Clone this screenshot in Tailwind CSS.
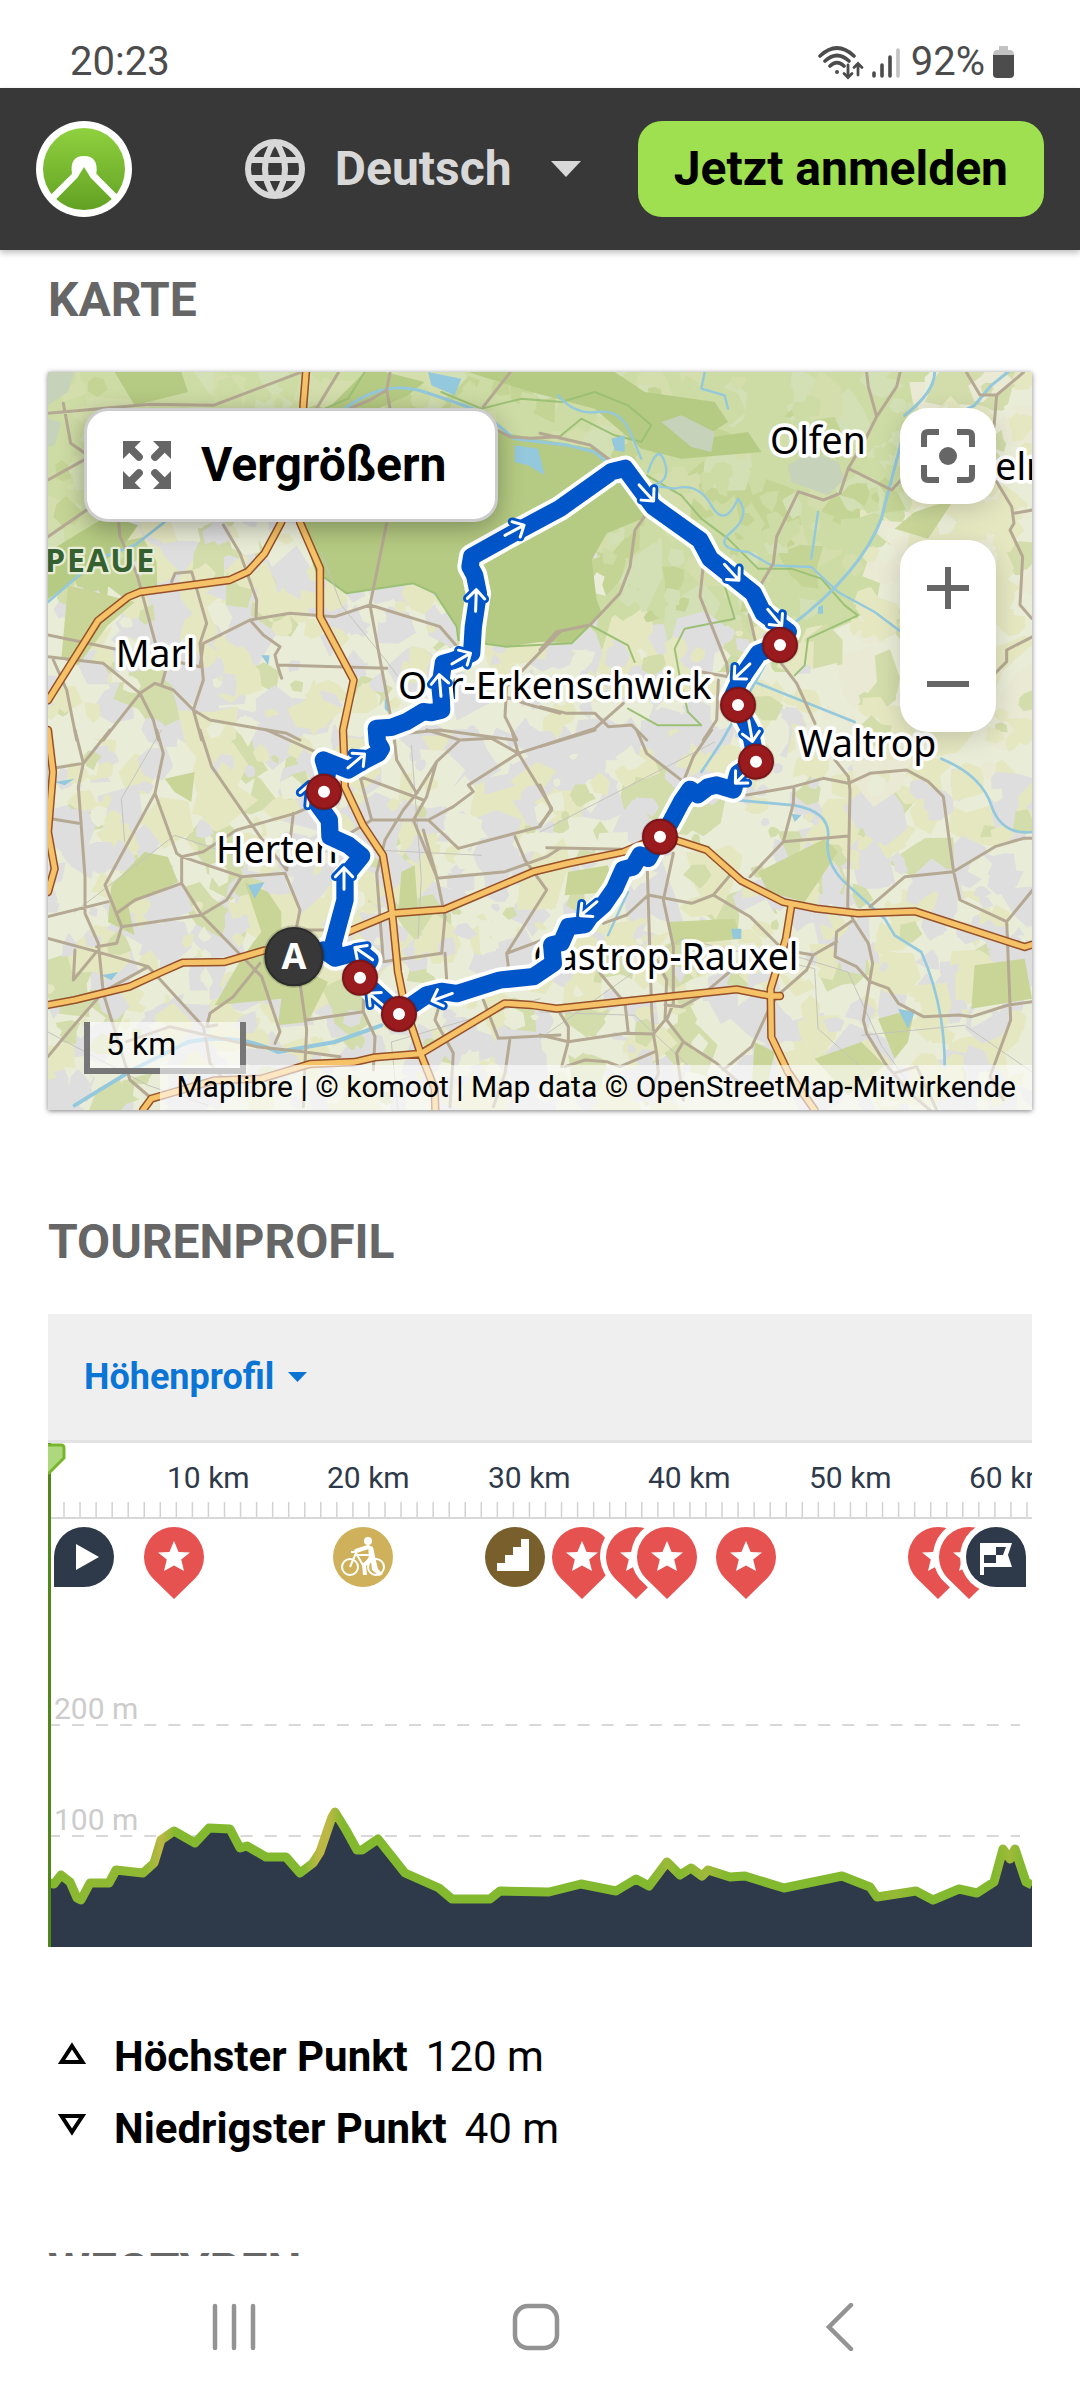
<!DOCTYPE html>
<html lang="de">
<head>
<meta charset="utf-8">
<meta name="viewport" content="width=device-width, initial-scale=1">
<title>Tour – Karte und Tourenprofil</title>
<script src="https://cdn.jsdelivr.net/npm/@tailwindcss/browser@4"></script>
</head>
<body class="flex h-screen flex-col overflow-hidden bg-white font-[Roboto,sans-serif] text-black">

<!-- Status bar -->
<div class="flex h-22 shrink-0 items-end justify-between pr-[66px] pb-[6px] pl-[70px] text-[#4c4c4c]">
  <span class="text-[40px] leading-[40px]">20:23</span>
  <span class="flex items-center gap-2">
    <svg class="h-9 w-22" viewBox="0 0 88 36" fill="none" stroke="#4c4c4c" stroke-width="3.6" stroke-linecap="round">
      <path d="M5 12Q22-4 39 12M10 17Q22 6 34 17M15 22Q22 15 29 22"/>
      <circle cx="22" cy="28" r="2" fill="#4c4c4c" stroke="none"/>
      <path d="M33 21V33M29 29.500L33 33.500L37 29.500M43 31V20M39 23.500L43 19.500L47 23.500" stroke-width="2.800"/>
      <path d="M59 29V32M67 21V32M75 13V32"/><path d="M83 6V32" stroke="#c2c2c2"/>
    </svg>
    <span class="text-[40px] leading-[40px]">92%</span>
    <svg class="h-8 w-[21px]" viewBox="0 0 21 32"><path d="M6 0H15V4H18Q21 5 21 9H0Q0 5 3 4H6Z" fill="#c2c2c2"/><path d="M0 9H21V28Q21 32 17 32H4Q0 32 0 28Z" fill="#4c4c4c"/></svg>
  </span>
</div>

<!-- Header -->
<header class="relative z-10 flex h-[162px] shrink-0 items-center justify-between bg-[#383838] px-9 shadow-[0_3px_6px_rgba(0,0,0,0.25)]">
  <a href="#" aria-label="komoot" class="block">
    <svg class="size-24" viewBox="0 0 288 288">
      <defs><linearGradient id="logo" x1="0" y1="0" x2="0" y2="1"><stop offset="0" stop-color="#8fd13f"/><stop offset="1" stop-color="#62a123"/></linearGradient></defs>
      <circle cx="144" cy="144" r="144" fill="#fff"/><circle cx="144" cy="144" r="123" fill="url(#logo)"/>
      <path d="M40 226L108 158Q100 105 144 105Q188 105 181 158L248 226L231 238L164 170L144 138L124 170L61 234Z" fill="#fff"/>
    </svg>
  </a>
  <div class="flex items-center">
    <label class="flex items-center text-[#d8d8d8]">
      <svg class="mr-[30px] size-15" viewBox="0 0 60 60" fill="none" stroke="#d8d8d8" stroke-width="6" aria-hidden="true">
        <circle cx="30" cy="30" r="27"/><path d="M4 21H56M4 39H56M29 3Q11 30 29 57M31 3Q49 30 31 57"/>
      </svg>
      <select aria-label="Sprache" class="w-[184px] appearance-none bg-transparent text-[48px] leading-[56px] font-bold outline-none"><option>Deutsch</option><option>English</option></select>
      <svg class="pointer-events-none ml-8 h-4 w-[30px]" viewBox="0 0 30 16"><path d="M0 0H30L15 16Z" fill="#d8d8d8"/></svg>
    </label>
    <button class="ml-[57px] h-24 rounded-3xl bg-[#9ee04f] px-9 text-[48px] leading-[56px] font-bold">Jetzt anmelden</button>
  </div>
</header>

<main class="min-h-0 flex-1 overflow-hidden px-12 pt-[22px]">
  <h2 class="text-[48px] leading-[56px] font-bold text-[#666]">KARTE</h2>

  <!-- Map -->
  <section class="relative mt-11 aspect-[4/3] overflow-hidden bg-[#e9edd7] shadow-[0_1px_5px_rgba(0,0,0,0.5)]" aria-label="Karte">
    <svg class="block size-full" viewBox="0 0 2952 2214" stroke-linejoin="round" stroke-linecap="round">
      <defs>
        <g id="arrow" fill="none">
          <path d="M-34 0H28M4-26L31 0L4 26" stroke="#0055c8" stroke-width="26"/>
          <path d="M-34 0H28M4-26L31 0L4 26" stroke="#fff" stroke-width="9"/>
        </g>
        <g id="stop"><circle r="57" fill="#000" fill-opacity=".12"/><circle r="51" fill="#9a1b1e" stroke="#7b1518" stroke-width="6"/><circle r="18" fill="#fff"/></g>
      </defs>

      <rect width="2952" height="2214" fill="#e9edd7"/>
      <path d="M0 0H2952V40L2740 60L2620 330L2510 560L2480 720L2290 800L2220 900L1900 900L1500 860L760 450L230 440L0 690Z" fill="#cddba4"/>
      <path d="M210 440L690 430L820 640L900 690L700 760L560 1000L420 900L260 850L170 700Z" fill="#dedede"/>
      <g id="patches"></g>

      <!-- Woodland -->
      <g fill="#b5ca82">
        <path d="M756 451L806 564L836 624L896 664L1096 634L1161 664L1226 764L1231 804L1316 814L1376 824L1476 810L1571 814L1626 759L1660 720L1646 684L1631 564L1676 484L1796 434L1731 289L1640 230L1376 184L1000 160L800 100L756 120Z"/>
        <path d="M1260 0H1700L1790 60L2000 90L2040 150L1960 200L2100 180L2140 240L1900 260L1780 230L1640 110L1450 60Z"/>
        <path d="M200 0H400L420 60L260 100Z"/><path d="M0 540L180 430L270 460L220 530L60 640L0 680Z"/>
        <path d="M950 0H1010L1130 30L1080 70L900 150L830 120Z"/>
      </g>
      <g fill="#c8d597">
        <path d="M60 640L260 690L180 760L90 880L40 860Z"/><path d="M290 1440L360 1455L390 1530L240 1600L260 1690L180 1650L190 1540Z"/>
        <path d="M590 1530L660 1560L700 1620L700 1760L840 1830L780 1950L690 1960L700 1880L500 1900L580 1760L640 1680Z"/>
        <path d="M350 1220L440 1200L430 1290L380 1260Z"/><path d="M1560 1500L1680 1480L1700 1560L1550 1570Z"/>
        <path d="M2130 1500L2330 1400L2370 1440L2270 1590L2160 1560Z"/><path d="M1860 1650L2060 1640L2080 1700L1880 1720Z"/>
        <path d="M2300 2060L2440 2010L2510 2080L2400 2170Z"/><path d="M2780 1780L2930 1760L2952 1880L2770 1910Z"/>
        <path d="M2490 1940L2600 1910L2580 2010L2540 2060Z"/><path d="M1060 1500L1100 1480L1110 1620L1050 1640Z"/>
        <path d="M2600 420L2720 380L2640 500L2540 470Z"/><path d="M2120 2010L2180 2040L2160 2130L2110 2160Z"/>
      </g>
      <g fill="#c7d2bb"><path d="M1840 150L1900 130L2000 180L1990 240L1930 225Z"/><path d="M2220 280L2290 240L2370 270L2390 320L2340 370L2230 330Z"/><path d="M0 0H80L60 60L0 100ZM0 140L40 150L20 220L0 225Z"/></g>

      <!-- Nature reserve outlines -->
      <g fill="none" stroke="#9cc176" stroke-width="6">
        <path d="M830 110L900 80L950 0M1180 60L1300 110L1420 80L1540 90L1640 60L1740 100L1810 160L1780 210L1700 190L1600 140L1540 190M1796 310L1900 370L1960 440L2040 500L2130 590L2230 590L2320 620L2390 700L2430 730L2280 800L2270 880L2240 910M2030 640L2060 740L1910 770L1880 830L1900 940L1920 1020L1960 1060L1830 1060L1740 1010M756 451L806 600L896 664L1096 634L1161 664L1226 764L1231 804L1376 824L1571 814L1626 759L1740 820L1760 870"/>
      </g>

      <!-- Water -->
      <g fill="none" stroke="#94c8dc" stroke-width="7">
        <path d="M890 110Q1010 20 1130 60T1300 120L1400 200L1560 220L1640 240L1700 290" stroke-width="9"/>
        <path d="M1530 70Q1580 130 1650 120T1750 190L1780 260M1800 300Q1830 210 1850 270T1810 340L1880 350Q1950 330 1990 400T2070 380Q2110 430 2050 480T2100 540L2170 580L2290 585L2370 660L2480 720L2560 780"/>
        <path d="M2660 0Q2660 60 2570 130M2880 0L2830 40L2780 100L2560 210L2500 440Q2440 600 2230 760" stroke-width="9"/>
        <path d="M0 690L150 560L260 520L350 450M2150 880L2020 1110L1960 1200M2120 930L2420 1050M2680 1160Q2800 1210 2830 1300T2952 1380M2020 1280L2240 1300Q2350 1320 2340 1400T2400 1540L2510 1640L2540 1690L2620 1740Q2690 1900 2690 2080" stroke-width="8"/>
        <path d="M80 2200L260 2090L420 2010Q560 1980 690 2040L860 2010L1000 1960" stroke-width="12"/>
        <path d="M1970 0L1960 50L2030 70L2040 110M1740 1560L1680 1690M2310 420L2290 560"/>
      </g>
      <g fill="#94c8dc"><path d="M1400 220L1470 230L1490 310L1440 280L1400 270Z"/><path d="M1690 200L1730 190L1730 240L1700 235ZM1140 0L1240 20L1220 70L1150 40ZM600 1540L650 1530L620 1580ZM160 1810L210 1800L190 1825ZM2550 1910L2600 1920L2580 1970ZM2230 1325L2260 1330L2240 1350ZM2050 1670L2080 1670L2080 1700L2055 1700Z"/><path d="M20 1230L80 1220L50 1240ZM640 850L665 850L660 880ZM1010 980L1020 980L1020 1020L1010 1010ZM2310 705L2325 700L2325 725L2310 725Z"/></g>

      <!-- Railways -->
      <g fill="none" stroke="#c4c4bd" stroke-width="3">
        <path d="M820 540L880 700L1010 860L1160 1060M80 1620L380 1390L620 1470L900 1430L1300 1450M340 1074L220 1280L230 1410M1090 1120L1120 1520L1110 1700M1476 1380L2000 1110M1476 2000L1900 1700L2300 1790L2310 1970L2500 2140M0 1980L300 2140L480 2200M1476 1920L1760 1930L1920 2080M2200 1740L2400 1800L2500 2020L2640 2214M2440 1990L2750 1960L2952 2100M1050 2214L1030 2010L1476 1880"/>
      </g>

      <!-- Minor roads -->
      <g fill="none" stroke="#b5a993" stroke-width="9">
        <g transform="translate(-24 -36)">
          <path d="M24 160L330 133L520 136L780 38M70 130L92 250L150 290L24 360M1410 38L1330 140M895 38L830 145M1050 38L1040 90L1050 145M1370 210L1410 230L1470 235L1560 230M930 145L990 120L1040 90M24 530L140 450M235 480L240 530L290 640L345 845L380 920L365 975M550 495L600 580L650 720L648 775M24 825L480 920L490 850L630 780L750 760L885 770L990 735L1040 490M395 665L405 640L455 635L500 790L480 850L490 960L460 1050L485 1140M990 735L1200 800L1260 870M990 735L1050 1060M670 825L720 860L705 885L712 915L1040 925M712 915L725 955M630 780L670 825M24 890L190 910L300 1000L340 1080L355 1140M40 900L80 990L110 1140M190 1140L300 1000L345 970L400 990L460 1050L510 1080L740 1120L780 1140M1560 815L1400 980L1395 1070L1430 1140M1395 1010L1470 1035L1560 1060M1100 1120L1200 1110L1420 1140"/>
        </g>
        <g transform="translate(1476 -36)">
          <path d="M980 38L985 80L1010 170L975 240L925 325L900 400L850 420L775 395L710 530L700 610L665 670L628 765L645 840M1080 38L1070 80L1010 170M925 325L1055 390L1120 320M1280 38L1320 105L1370 105L1450 38M1370 105L1362 200M1370 365L1415 440L1422 490L1410 510L1448 590L1440 735L1475 775M1422 460L1478 450M1478 830L1400 870L1400 905L1360 945M0 220L150 255L210 300M320 460L285 510L270 620L240 700L150 795L50 815L0 870M490 615L480 710L560 910L565 950M720 905L770 970L825 1090M565 950L480 935M0 1040L80 1060L165 1060L205 1100L275 1095L320 1140M60 1140L165 1105L250 1030M490 1140L530 1080L535 960"/>
        </g>
        <g transform="translate(-24 1074)">
          <path d="M105 0L130 100L115 170L135 440L135 550L175 640L190 790L270 1050L340 1110M130 100L210 0M40 115L130 100M24 265L115 280M350 0L370 70L345 190L195 465L245 590L230 640L170 650M345 190L410 370L425 380L605 440L735 430L780 540L770 590M425 380L425 460L285 510L230 550M425 380L490 365L590 300L765 250L800 235M24 560L205 515M425 460L485 555L245 590M485 555L560 510L605 440M485 555L665 740L720 905L705 940M24 625L170 665L325 710L490 890L500 940L510 1000L560 1060M170 665L100 750L105 660M325 710L190 785L90 900L24 980M260 935L390 890L650 950L790 965L900 980M530 885L500 890L510 850L580 800L660 700M480 0L515 110L660 320L740 420L760 250M680 0L825 65M780 760L800 900L795 1000L790 1130M800 870L970 845L1005 920L1000 1020M970 845L970 770M890 600L780 600M1060 0L1070 90L1130 190L1090 240L1035 330L1010 430L1030 695L1205 670L1215 560L1190 440L1120 270L1160 200L1190 95M960 140L1150 210M930 310L995 270L1165 270L1240 230L1300 185L1285 165L1435 70L1560 30M1160 0L1260 30L1355 25L1435 70L1535 235L1500 290L1255 355L1165 270M1130 190L1190 95L1260 30M960 140L995 270M1190 445L1395 425L1520 380L1560 355M1190 440L1150 300M1425 320L1455 390L1520 480L1400 670L1405 710M1400 670L1560 610M1215 670L1220 750L1185 870L1240 970L1230 1130M1330 810L1375 925L1560 915M1410 925L1395 1030L1360 1130M1415 0L1435 70"/>
        </g>
        <g transform="translate(1476 1074)">
          <path d="M0 50L165 0M290 0L320 70L430 155L460 80L515 0M620 195L760 170L850 145L925 160L990 130L1100 120L1165 155L1210 200L1240 420L1260 510L1400 575L1478 480M885 90L925 140L930 180L923 530L940 570L985 640L998 700L970 870L980 910L1035 1000L1110 1090L1170 1140M762 170L760 220L730 335L630 440M730 335L925 318M0 165L35 240L0 285M20 353L250 358M322 420L335 840L340 900M400 370L370 510L400 650L400 820L380 870L430 935L410 970L430 1110M190 580L260 555L325 495L455 520L520 495L575 430M520 495L630 560L730 660L820 675L890 635M940 570L890 605L885 680L950 710L990 755L1045 775L1075 820L1150 860L1258 855L1295 860L1405 825L1478 815M820 675L800 720L720 790L690 830L635 950L550 1020M1400 575L1412 870L1350 1040L1390 1110M990 530L1095 440L1240 425L1365 350L1450 325L1478 325M0 915L85 935L255 910L340 912L350 970L355 1030L330 1090M85 935L65 1010M75 1010L135 990L200 995L240 1010L345 965M60 850L85 890L85 935M255 820L265 910M180 730L255 820M340 912L375 870L380 750L350 690M375 825L425 830L480 800L570 725M430 935L530 1000L600 1060M1190 1140L1130 1010L1060 1030"/>
        </g>
      </g>

      <!-- Motorways: casing, then fill -->
      <path id="mw" fill="none" stroke="#95502a" stroke-width="25" d="M774 0L766 100L756 451L816 589L816 734L917 924L885 1074L890 1190L890 1244L945 1360L1005 1450L1030 1600L1050 1800L1070 1900L1118 2045L1160 2150L1162 2214M700 451L650 544L600 599L545 624L276 660L240 675L150 746L0 985M0 1074L15 1200L0 1380L20 1490L0 1560M0 1899L80 1884L244 1844L340 1800L404 1772L530 1770L650 1735M890 1684L1034 1624L1190 1612L1457 1499L1560 1474L1726 1440L1836 1394L1890 1406L1976 1434L2080 1526L2206 1590L2306 1610L2430 1624L2600 1618L2930 1725L2952 1718M2230 1600L2214 1700L2168 1850L2170 1995L2220 2100L2300 2214M2196 1872L2168 1872L2066 1852L1526 1910L1450 1899L1370 1894L1118 2045L980 2056L920 2070L786 2076L640 2120L500 2125L310 2180L285 2214"/>
      <path id="mwFill" fill="none" stroke="#f5c267" stroke-width="16"/>

      <!-- Place names -->
      <g font-family="Noto Sans, sans-serif" font-size="112" fill="#000" stroke="#fff" stroke-width="22" paint-order="stroke">
        <text x="203" y="886">Marl</text>
        <text x="1050" y="980">Oer-Erkenschwick</text>
        <text x="2166" y="245">Olfen</text>
        <text x="2842" y="323">elm</text>
        <text x="2250" y="1154">Waltrop</text>
        <text x="504" y="1474">Herten</text>
        <text x="1456" y="1793">Castrop-Rauxel</text>
        <text x="-8" y="600" font-size="96" font-weight="700" letter-spacing="5" fill="#35602f" stroke="#e9edd7" stroke-width="14">PEAUE</text>
      </g>

      <!-- Route -->
      <g fill="none">
        <path id="route" d="M826 1734L861 1758L856 1714L891 1584L891 1514L941 1452L901 1419L846 1394L844 1344L811 1299L828 1259L838 1204L826 1164L901 1194L950 1165L991 1144L1000 1130L988 1110L985 1069L1030 1066L1076 1049L1126 1019L1150 1022L1181 1014L1180 985L1176 944L1186 874L1215 866L1271 844L1276 764L1291 664L1280 610L1266 584L1271 554L1396 484L1536 409L1691 299L1731 289L1816 404L1956 504L1986 560L2116 664L2146 724L2221 779L2196 819L2131 844L2076 924L2050 980L2066 999L2106 1074L2124 1169L2070 1204L2056 1254L2006 1239L1980 1245L1950 1268L1926 1252L1900 1290L1866 1354L1836 1394L1801 1459L1776 1449L1755 1485L1726 1492L1700 1550L1666 1599L1626 1634L1610 1658L1561 1664L1540 1712L1511 1719L1516 1774L1456 1814L1356 1824L1226 1865L1180 1858L1136 1869L1053 1926L936 1819L966 1764L936 1739L861 1758" stroke="#fff" stroke-width="76"/>
        <path id="routeLine" stroke="#0055c8" stroke-width="52"/>
      </g>
      <g>
        <use href="#arrow" transform="translate(1401 474) rotate(-28)"/><use href="#arrow" transform="translate(1284 684) rotate(-88)"/>
        <use href="#arrow" transform="translate(1241 859) rotate(-30)"/><use href="#arrow" transform="translate(1176 939) rotate(-95)"/>
        <use href="#arrow" transform="translate(1796 364) rotate(48)"/><use href="#arrow" transform="translate(2052 602) rotate(48)"/>
        <use href="#arrow" transform="translate(2181 738) rotate(50)"/><use href="#arrow" transform="translate(2081 899) rotate(137)"/>
        <use href="#arrow" transform="translate(2108 1078) rotate(80)"/><use href="#arrow" transform="translate(2084 1212) rotate(135)"/>
        <use href="#arrow" transform="translate(1621 1611) rotate(140)"/><use href="#arrow" transform="translate(926 1166) rotate(-40)"/>
        <use href="#arrow" transform="translate(888 1518) rotate(-90)"/><use href="#arrow" transform="translate(946 1744) rotate(-145)"/>
        <use href="#arrow" transform="translate(986 1884) rotate(-140)"/><use href="#arrow" transform="translate(1181 1876) rotate(160)"/>
        <use href="#arrow" transform="translate(782 1268) rotate(-85)"/>
      </g>
      <use href="#stop" x="2196" y="819"/><use href="#stop" x="2070" y="999"/><use href="#stop" x="2124" y="1169"/><use href="#stop" x="1836" y="1394"/>
      <use href="#stop" x="828" y="1259"/><use href="#stop" x="936" y="1817"/><use href="#stop" x="1053" y="1926"/>
      <circle cx="738" cy="1754" r="94" fill="#000" fill-opacity=".15"/><circle cx="738" cy="1754" r="86" fill="#383838" stroke="#2c2c2c" stroke-width="6"/>
      <text x="738" y="1791" text-anchor="middle" font-family="Noto Sans, sans-serif" font-weight="700" font-size="108" fill="#fff">A</text>
    </svg>

    <button class="absolute top-9 left-9 flex h-[114px] items-center gap-[30px] rounded-3xl border-3 border-[#ccc] bg-white pr-12 pl-9 text-[48px] leading-[56px] font-bold shadow-[0_6px_24px_rgba(0,0,0,0.3)]">
      <svg class="size-12" viewBox="0 0 144 144" fill="#666" stroke="#666" aria-hidden="true">
        <g stroke="none"><path d="M0 0H54L0 54ZM144 0V54L90 0ZM0 144V90L54 144ZM144 144H90L144 90Z"/></g>
        <g stroke-width="23" stroke-linecap="round"><path d="M24 24L48 48M120 24L96 48M24 120L48 96M120 120L96 96"/></g>
      </svg>
      Vergrößern
    </button>
    <div class="absolute top-9 right-9 flex w-24 flex-col gap-9">
      <button aria-label="Zentrieren" class="flex h-24 items-center justify-center rounded-[28px] bg-white shadow-[0_6px_24px_rgba(0,0,0,0.15)]">
        <svg class="size-[54px]" viewBox="0 0 54 54" fill="none" stroke="#666" stroke-width="6"><path d="M3 18V7Q3 3 7 3H18M36 3H47Q51 3 51 7V18M51 36V47Q51 51 47 51H36M18 51H7Q3 51 3 47V36"/><circle cx="27" cy="27" r="9" fill="#666" stroke="none"/></svg>
      </button>
      <div class="flex flex-col rounded-[28px] bg-white shadow-[0_6px_24px_rgba(0,0,0,0.15)]">
        <button aria-label="Vergrößern" class="flex h-24 items-center justify-center"><svg class="size-[42px]" viewBox="0 0 42 42" stroke="#666" stroke-width="6"><path d="M0 21H42M21 0V42"/></svg></button>
        <button aria-label="Verkleinern" class="flex h-24 items-center justify-center"><svg class="size-[42px]" viewBox="0 0 42 42" stroke="#666" stroke-width="6"><path d="M0 21H42"/></svg></button>
      </div>
    </div>
    <div class="absolute bottom-9 left-9 h-13 w-[162px] border-6 border-t-0 border-[#777] bg-white/60 px-4 text-[32px] leading-[44px]">5 km</div>
    <div class="absolute right-0 bottom-0 bg-white/60 px-4 pb-[1px] text-[30px] leading-[44px] whitespace-nowrap"><a href="#">Maplibre</a> | <a href="#">© komoot</a> | Map data <a href="#">© OpenStreetMap-Mitwirkende</a></div>
  </section>

  <h2 class="mt-[104px] text-[48px] leading-[56px] font-bold text-[#666]">TOURENPROFIL</h2>

  <!-- Elevation profile -->
  <section class="mt-11" aria-label="Tourenprofil">
    <div class="flex h-[129px] items-center border-b-3 border-[#e2e2e2] bg-[#efefef] px-9">
      <label class="flex items-center">
        <select aria-label="Profil wählen" class="w-[196px] appearance-none bg-transparent text-[36px] leading-[44px] font-bold text-[#0b75d6] outline-none"><option>Höhenprofil</option><option>Wegtypen</option></select>
        <svg class="pointer-events-none ml-2 h-[10px] w-[19px]" viewBox="0 0 19 10"><path d="M0 0H19L9.500 10Z" fill="#0b75d6"/></svg>
      </label>
    </div>
    <svg class="block w-full" viewBox="0 0 984 504" font-family="Roboto, sans-serif" font-size="30">
      <defs>
        <path id="star" d="M0-16L4.600-5L16-4.400L7.200 2.600L10 14L0 8.500L-10 14L-7.200 2.600L-16-4.400L-4.600-5Z" fill="#fff"/>
        <g id="pin"><path d="M-22 27.500A36 36 0 1 1 22 27.500L0 50Z" fill="#fff"/><path d="M-21 21.400A30 30 0 1 1 21 21.400L0 42Z" fill="#e55250"/><use href="#star"/></g>
        <linearGradient id="slope" gradientUnits="userSpaceOnUse" x1="0" y1="0" x2="984" y2="0">
          <stop offset="0" stop-color="#82b92e"/><stop offset=".04" stop-color="#8fb933"/><stop offset=".1" stop-color="#8fb933"/><stop offset=".115" stop-color="#bdb743"/><stop offset=".13" stop-color="#82b92e"/><stop offset=".26" stop-color="#82b92e"/><stop offset=".275" stop-color="#bdb743"/><stop offset=".285" stop-color="#bdb743"/><stop offset=".3" stop-color="#82b92e"/><stop offset=".61" stop-color="#82b92e"/><stop offset=".63" stop-color="#9cb93a"/><stop offset=".64" stop-color="#82b92e"/><stop offset=".67" stop-color="#a0b93a"/><stop offset=".69" stop-color="#82b92e"/><stop offset=".83" stop-color="#82b92e"/><stop offset=".86" stop-color="#96b935"/><stop offset=".89" stop-color="#82b92e"/><stop offset=".96" stop-color="#82b92e"/><stop offset=".978" stop-color="#a0b93a"/><stop offset=".99" stop-color="#82b92e"/>
        </linearGradient>
      </defs>
      <g fill="#2e3949">
        <text x="119" y="45">10 km</text><text x="279" y="45">20 km</text><text x="440" y="45">30 km</text><text x="600" y="45">40 km</text><text x="761" y="45">50 km</text><text x="921" y="45">60 km</text>
      </g>
      <path stroke="#d2d2d2" stroke-width="15" stroke-dasharray="1.500 14.550" d="M15.250 66.500H984"/>
      <path stroke="#d8d8d8" stroke-width="2" d="M3 75H984"/>
      <g fill="#ccc"><text x="6" y="276">200 m</text><text x="6" y="387">100 m</text></g>
      <path d="M0 282H972M0 393H972" stroke="#d8d8d8" stroke-width="2" stroke-dasharray="12 12.070"/>
      <path d="M0 504V440L6 441L13 432L22 439L29 455L33 457L42 440L61 440L68 427L95 430L106 420L113 397L126 388L147 400L161 385L182 386L192 405L199 403L218 414L238 414L252 430L265 420L272 409L284 374L287 369L298 387L309 407L314 407L330 396L357 430L391 445L404 456L442 456L452 448L501 449L533 441L568 448L588 436L601 443L619 419L632 432L643 425L654 433L660 427L682 434L697 433L736 445L794 433L822 444L829 454L868 448L885 457L911 446L929 450L946 439L955 406L962 416L967 406L978 439L984 442V504Z" fill="#2e3949"/>
      <path d="M0 440L6 441L13 432L22 439L29 455L33 457L42 440L61 440L68 427L95 430L106 420L113 397L126 388L147 400L161 385L182 386L192 405L199 403L218 414L238 414L252 430L265 420L272 409L284 374L287 369L298 387L309 407L314 407L330 396L357 430L391 445L404 456L442 456L452 448L501 449L533 441L568 448L588 436L601 443L619 419L632 432L643 425L654 433L660 427L682 434L697 433L736 445L794 433L822 444L829 454L868 448L885 457L911 446L929 450L946 439L955 406L962 416L967 406L978 439L984 442" fill="none" stroke="url(#slope)" stroke-width="9" stroke-linejoin="round"/>
      <g>
        <path d="M6 114A30 30 0 1 1 36 144H6Z" fill="#2e3949"/><path d="M28 101L51 114L28 127Z" fill="#fff"/>
        <use href="#pin" x="126" y="114"/>
        <g transform="translate(315 114)"><circle r="30" fill="#cfb15c"/>
          <g fill="none" stroke="#fff" stroke-width="2"><circle cx="-13" cy="10" r="8"/><circle cx="13" cy="10" r="8"/><path d="M-13 10L-7-4L1 10M-7-2H8L1 10M-12-5H-6M8-2L13 10"/></g>
          <circle cx="5" cy="-16" r="4" fill="#fff"/><path d="M5-10L-7-6" stroke="#fff" stroke-width="4" stroke-linecap="round"/><path d="M5-12L10-10L13 4L15 12L20 17L16 19L9 13L8 5L3 9L4 18H0L-1 7L6 1Z" fill="#fff"/>
        </g>
        <g transform="translate(467 114)"><circle r="30" fill="#795f2b"/><path d="M-18 14V6H-10V-2H-2V-10H6V-18H14V14Z" fill="#fff"/></g>
        <use href="#pin" x="534" y="114"/><use href="#pin" x="588" y="114"/><use href="#pin" x="619" y="114"/><use href="#pin" x="698" y="114"/><use href="#pin" x="890" y="114"/><use href="#pin" x="921" y="114"/>
        <circle cx="948" cy="114" r="36" fill="#fff"/><path d="M978 114A30 30 0 1 0 948 144H978Z" fill="#2e3949"/>
        <path d="M932 100H964L960 112L964 124H936V132H932Z" fill="#fff"/><path d="M936 112H948V104H958L955 112H948V120H936Z" fill="#2e3949"/>
      </g>
      <path d="M1.500 0V504" stroke="#4f8718" stroke-width="3"/>
      <path d="M0 2H13Q16 2 16 5V15L0 31" fill="#aed87d" stroke="#78b52c" stroke-width="3"/>
    </svg>
  </section>

  <dl class="mt-[74px] text-[42px] leading-[72px]">
    <div class="flex items-center gap-[18px]">
      <dt class="flex items-center gap-7 font-bold"><svg class="mb-2 ml-[10px] h-[22px] w-7" viewBox="0 0 28 22" fill="none" stroke="#000" stroke-width="4"><path d="M14 4L24.500 20H3.500Z"/></svg>Höchster Punkt</dt><dd>120 m</dd>
    </div>
    <div class="flex items-center gap-[18px]">
      <dt class="flex items-center gap-7 font-bold"><svg class="mb-2 ml-[10px] h-[22px] w-7" viewBox="0 0 28 22" fill="none" stroke="#000" stroke-width="4"><path d="M14 18L24.500 2H3.500Z"/></svg>Niedrigster Punkt</dt><dd>40 m</dd>
    </div>
  </dl>

  <h2 class="mt-[78px] text-[48px] leading-[56px] font-bold text-[#666]">WEGTYPEN</h2>
</main>

<!-- System navigation -->
<nav class="flex h-36 shrink-0 items-center justify-between bg-white pr-[226px] pb-[2px] pl-[210px]">
  <button aria-label="Letzte Apps"><svg class="size-12" viewBox="0 0 48 48" stroke="#939393" stroke-width="4.500" stroke-linecap="round"><path d="M5 3V45M24 3V45M43 3V45"/></svg></button>
  <button aria-label="Startseite" class="mr-3"><svg class="size-12" viewBox="0 0 48 48" fill="none" stroke="#939393" stroke-width="4.500"><rect x="3" y="3" width="42" height="42" rx="13"/></svg></button>
  <button aria-label="Zurück"><svg class="h-12 w-7" viewBox="0 0 28 48" fill="none" stroke="#939393" stroke-width="4.500" stroke-linecap="round"><path d="M25 2L3 24L25 46"/></svg></button>
</nav>

<script>
  // The coloured lines repeat the geometry of their casings.
  const copyPath = (from, to) => document.getElementById(to).setAttribute('d', document.getElementById(from).getAttribute('d'));
  copyPath('route', 'routeLine');
  copyPath('mw', 'mwFill');

  // Land-use mosaic: small irregular fields, woods and built-up areas.
  let seed = 11;
  const rnd = () => (seed = (seed * 16807) % 2147483647) / 2147483647;
  const green = ['#cddba4', '#cddba4', '#d3e0b5', '#cddba4', '#c4d494', '#d3deac'];
  const mixed = ['#dedede', '#dedede', '#e5e7c1', '#e5e7c1', '#e9edd7', '#dedede', '#dedede', '#e5e7c1', '#e9edd7', '#d3dcab'];
  const east = ['#e5e7c1', '#e5e7c1', '#e9edd7', '#e5e7c1', '#d3dcab', '#e9e9d4'];
  let out = '';
  for (let i = 0; i < 1900; i++) {
    const x = rnd() * 2952, y = rnd() * 2214, big = i < 900;
    const wooded = (y < 400 && x < 2600) || (x < 230 && y < 620) || (x > 1650 && x < 2450 && y < 760);
    const set = wooded ? green : (x > 2300 && y < 1200 ? east : mixed);
    const size = big ? 50 + rnd() * 60 : 14 + rnd() * 34, n = 5 + Math.floor(rnd() * 4), turn = rnd() * 6;
    let d = '';
    for (let k = 0; k < n; k++) {
      const a = turn + k * 6.283 / n, r = size * (0.45 + rnd() * 0.75);
      d += (k ? 'L' : 'M') + Math.round(x + Math.cos(a) * r) + ' ' + Math.round(y + Math.sin(a) * r);
    }
    out += `<path d="${d}Z" fill="${set[Math.floor(rnd() * set.length)]}"/>`;
  }
  document.getElementById('patches').innerHTML = out;
</script>
</body>
</html>
